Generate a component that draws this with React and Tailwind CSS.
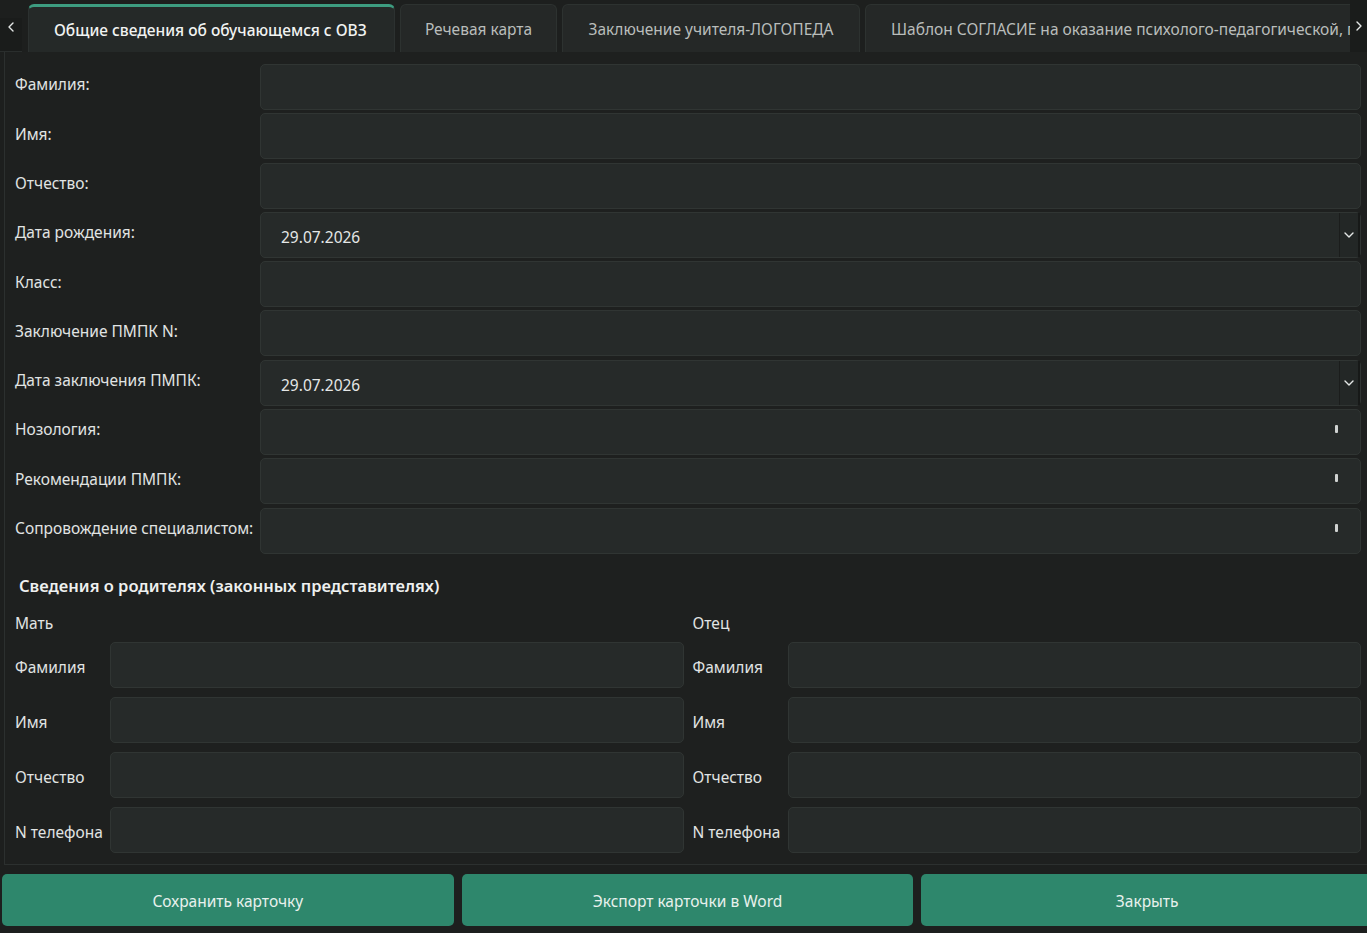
import React from "react";

const font = "font-['Noto_Sans','Open_Sans',sans-serif]";

const mainFields = [
  { label: "Фамилия:" },
  { label: "Имя:" },
  { label: "Отчество:" },
  { label: "Дата рождения:", date: "29.07.2026" },
  { label: "Класс:" },
  { label: "Заключение ПМПК N:" },
  { label: "Дата заключения ПМПК:", date: "29.07.2026" },
  { label: "Нозология:", combo: true },
  { label: "Рекомендации ПМПК:", combo: true },
  { label: "Сопровождение специалистом:", combo: true },
];

const parentFields = ["Фамилия", "Имя", "Отчество", "N телефона"];

function Chevron({ dir = "down" }) {
  const d = {
    down: "M2 4l4 4 4-4",
    left: "M8 2L4 6l4 4",
    right: "M4 2l4 4-4 4",
  }[dir];
  return (
    <svg width="12" height="12" viewBox="0 0 12 12" fill="none">
      <path d={d} stroke="#e4e7e6" strokeWidth="1.4" strokeLinecap="round" strokeLinejoin="round" />
    </svg>
  );
}

function Field({ date, combo }) {
  return (
    <div className="flex-1 h-full relative flex items-center rounded-[5px] bg-[#262a29] border border-[#303533]">
      {date && <span className="pl-[20px] pt-[5px] text-[15.5px] text-[#e4e7e6]">{date}</span>}
      {date && (
        <div className="absolute right-0 top-0 bottom-0 w-[21px] bg-[#232726] border-l border-[#1b1d1c] border-r-2 border-r-[#171918] flex items-center justify-center">
          <Chevron />
        </div>
      )}
      {combo && <div className="absolute right-[22px] top-[15px] w-[3px] h-[8px] bg-[#cfd2d1] rounded-[1px]" />}
    </div>
  );
}

function Tab({ children, active, className = "" }) {
  return (
    <div
      className={
        "h-[48px] flex items-center shrink-0 rounded-t-[6px] border border-b-0 pt-[3px] " +
        (active
          ? "bg-[#252928] border-[#2c3130] border-t-[3px] border-t-[#3d9c80] text-[#f1f3f2] font-medium "
          : "bg-[#252827] border-[#2d3230] text-[#b9bdbb] ") +
        className
      }
    >
      {children}
    </div>
  );
}

export default function App() {
  return (
    <div className={`w-[1367px] h-[933px] bg-[#1d1f1e] flex flex-col overflow-hidden ${font}`}>
      <div className="h-[52px] flex items-end shrink-0 relative">
        <div className="absolute left-0 top-[18px] w-[22px] h-[34px] bg-[#1a1c1b] border-b border-[#2a2e2d] flex items-start justify-center pt-[3px]">
          <Chevron dir="left" />
        </div>
        <div className="flex items-end gap-[5px] pl-[28px] overflow-hidden w-[1350px]">
          <Tab active className="w-[367px] pl-[25px] text-[15.5px]">
            Общие сведения об обучающемся с ОВЗ
          </Tab>
          <Tab className="w-[157px] justify-center text-[15.5px]">Речевая карта</Tab>
          <Tab className="w-[298px] justify-center text-[15.5px]">Заключение учителя-ЛОГОПЕДА</Tab>
          <Tab className="w-[520px] pl-[25px] text-[15.5px] whitespace-nowrap">
            Шаблон СОГЛАСИЕ на оказание психолого-педагогической, п
          </Tab>
        </div>
        <div className="absolute right-0 top-[0px] w-[17px] h-[52px] bg-[#1a1c1b] flex items-center justify-center">
          <Chevron dir="right" />
        </div>
      </div>

      <div className="ml-[4px] h-[813px] shrink-0 border-l border-b border-[#2c302f] bg-[#1e201f] flex flex-col pt-[12px] pl-[10px] pr-[6px]">
        <div className="flex flex-col gap-[3.3px]">
          {mainFields.map((f) => (
            <div key={f.label} className="h-[46px] flex items-center">
              <div className="w-[245px] shrink-0 text-[15.5px] text-[#e1e4e3] pb-[4px] whitespace-nowrap">{f.label}</div>
              <Field date={f.date} combo={f.combo} />
            </div>
          ))}
        </div>

        <h2 className="mt-[20px] pl-[4px] text-[16.5px] font-semibold text-[#eef0ef] leading-[24px]">
          Сведения о родителях (законных представителях)
        </h2>

        <div className="grid grid-cols-2 gap-x-[9px] mt-[14px]">
          {["Мать", "Отец"].map((who) => (
            <div key={who} className="flex flex-col">
              <div className="text-[15.5px] text-[#e1e4e3] leading-[20px] mb-[9px] pt-[1px]">{who}</div>
              <div className="flex flex-col gap-[9px]">
                {parentFields.map((p) => (
                  <div key={p} className="h-[46px] flex items-center">
                    <div className="w-[95px] shrink-0 text-[15.5px] text-[#e1e4e3] pt-[5px] whitespace-nowrap">{p}</div>
                    <Field />
                  </div>
                ))}
              </div>
            </div>
          ))}
        </div>
      </div>

      <div className="flex gap-[8px] px-[2px] mt-[9px] h-[52px] shrink-0 w-[1375px]">
        {["Сохранить карточку", "Экспорт карточки в Word", "Закрыть"].map((t) => (
          <button
            key={t}
            className="w-[452px] h-full rounded-[5px] bg-[#2e876c] text-[15.5px] text-[#e8f1ed] flex items-center justify-center pt-[4px]"
          >
            {t}
          </button>
        ))}
      </div>
    </div>
  );
}
